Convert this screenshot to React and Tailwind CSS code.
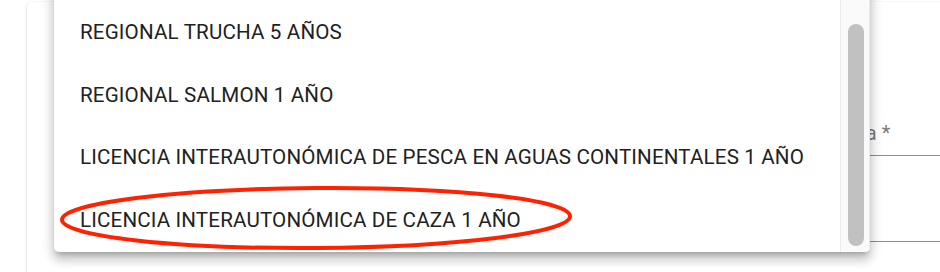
import React from "react";

const items = [
  "REGIONAL TRUCHA 5 AÑOS",
  "REGIONAL SALMON 1 AÑO",
  "LICENCIA INTERAUTONÓMICA DE PESCA EN AGUAS CONTINENTALES 1 AÑO",
  "LICENCIA INTERAUTONÓMICA DE CAZA 1 AÑO",
];

export default function App() {
  return (
    <div
      className="relative w-[940px] h-[272px] overflow-hidden bg-white"
      style={{ fontFamily: "Roboto, 'Noto Sans', Arial, sans-serif" }}
    >
      {/* Background card */}
      <div className="ml-[27px] mt-[2px] w-[960px] h-[320px] rounded-tl-[5px] bg-white shadow-[0_1px_3px_rgba(0,0,0,0.18),0_1px_1px_rgba(0,0,0,0.10)] pl-[708px]">
        <div className="w-[300px]">
          <div className="pt-[119px] pb-[10px] border-b border-[#8c8c8c]">
            <div className="text-[20px] leading-[24px] tracking-[0.15px] text-[#7a7a7a] whitespace-nowrap">
              Tipo de licencia *
            </div>
          </div>
          <div className="pt-[61px] border-b border-[#8c8c8c]">
            <div className="text-[20px] leading-[24px] tracking-[0.15px] text-[#7a7a7a] whitespace-nowrap">
              Fecha *
            </div>
          </div>
        </div>
      </div>

      {/* Dropdown menu */}
      <div className="absolute left-[54px] top-[-20px] w-[816px] h-[272px] rounded-[5px] bg-white overflow-hidden flex shadow-[0_5px_5px_-3px_rgba(0,0,0,0.2),0_8px_10px_1px_rgba(0,0,0,0.14),0_3px_14px_2px_rgba(0,0,0,0.12)]">
        <ul className="flex-1 pt-[20.6px]">
          {items.map((t) => (
            <li
              key={t}
              className="h-[62.75px] flex items-center pl-[26px] text-[20.6px] leading-[30px] tracking-[0.15px] text-[#212121] whitespace-nowrap"
            >
              {t}
            </li>
          ))}
        </ul>
        <div className="w-[30px] h-full border-l border-[#ebebeb] border-r bg-[#fafafa] pl-[7px] pt-[44px]">
          <div className="w-[16px] h-[222px] rounded-full bg-[#c1c1c1]" />
        </div>
      </div>

      {/* Red annotation ellipse */}
      <svg
        className="absolute left-0 top-0 pointer-events-none"
        width="940"
        height="272"
        viewBox="0 0 940 272"
      >
        <ellipse
          cx="316"
          cy="218"
          rx="254"
          ry="30"
          fill="none"
          stroke="#ff2200"
          strokeWidth="4"
          transform="rotate(-0.4 316 218)"
        />
      </svg>
    </div>
  );
}
